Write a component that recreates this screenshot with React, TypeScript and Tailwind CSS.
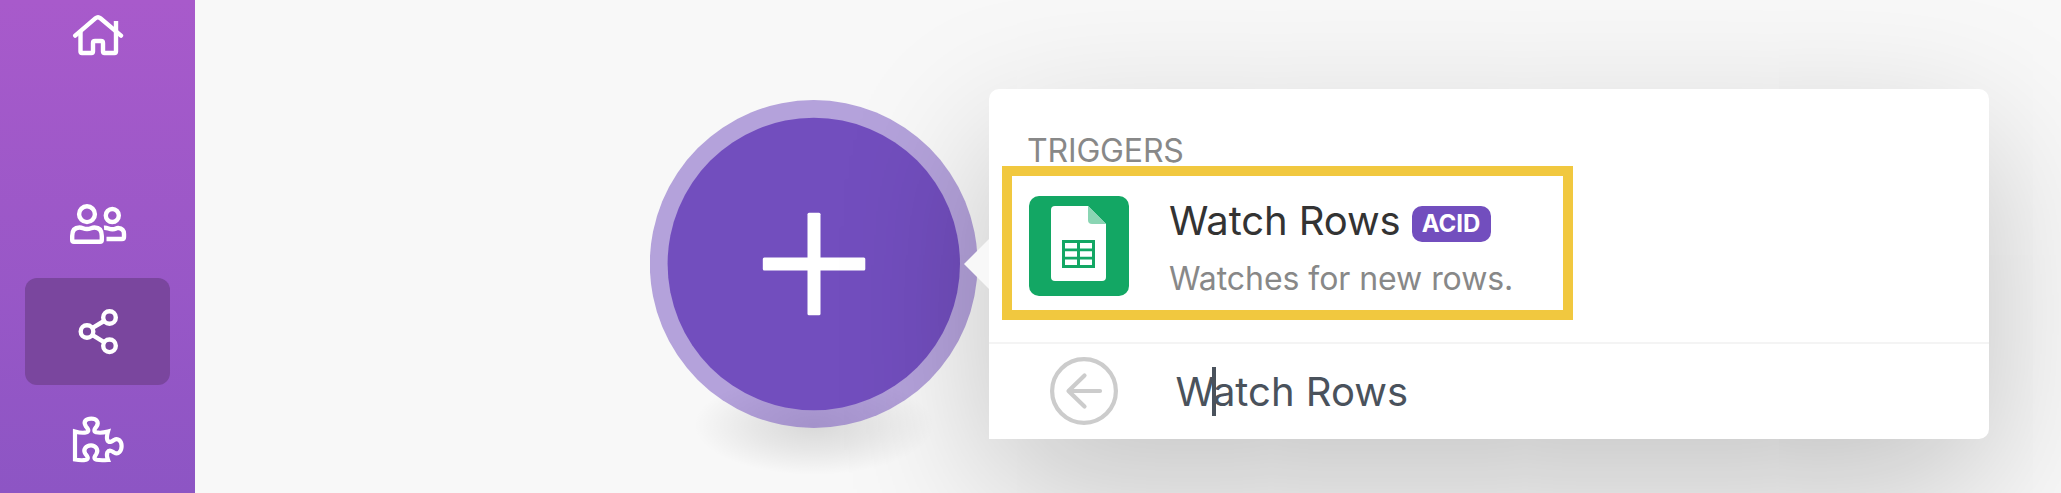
import React from "react";

const stroke = {
  fill: "none",
  stroke: "currentColor",
  strokeLinecap: "round" as const,
  strokeLinejoin: "round" as const,
};

function HomeIcon() {
  return (
    <svg width="52" height="42" viewBox="72 14 52 42" {...stroke} strokeWidth="4.4">
      <path d="M75.200 35.600 L95.600 18.200 Q98 16.200 100.400 18.200 L121 35.600" />
      <path d="M80.500 32 V51.500 Q80.500 53 82 53 H91.500 Q93 53 93 51.500 V43 Q93 41 95 41 H101 Q103 41 103 43 V51.500 Q103 53 104.500 53 H114.500 Q116 53 116 51.500 V21" strokeLinecap="butt" />
    </svg>
  );
}

function TeamIcon() {
  return (
    <svg width="58" height="42" viewBox="69 203 58 42" {...stroke} strokeWidth="4.4">
      <circle cx="87" cy="214.2" r="7.9" />
      <circle cx="112.3" cy="215.5" r="6.500" />
      <path d="M72.200 240 V236 Q72.200 227.500 79.500 227.500 C83 227.500 83 229 87 229 C91 229 91 227.500 94.500 227.500 Q101.800 227.500 101.800 236 V240 Q101.800 241.800 100 241.800 H74 Q72.200 241.800 72.200 240 Z" />
      <path d="M104 227.800 C108 227.500 108.500 229.300 112.500 229.300 C116 229.300 116 227.900 118 227.900 Q124 228.500 124 234 V237 Q124 239 122 239 H106.500" strokeLinecap="butt" />
    </svg>
  );
}

function ShareIcon() {
  return (
    <svg width="42" height="48" viewBox="77 307.500 42 48" {...stroke} strokeWidth="4.400">
      <circle cx="87" cy="331" r="6.300" />
      <circle cx="109.500" cy="317" r="6.300" />
      <circle cx="109.500" cy="345.300" r="6.300" />
      <path d="M92.600 327.300 L104 320.500 M92.600 334.700 L104 341.700" />
    </svg>
  );
}

function PuzzleIcon() {
  return (
    <svg width="54" height="48" viewBox="72 415 54 48" {...stroke} strokeWidth="4.200" strokeLinejoin="miter">
      <path d="M75 431.500 C79 432.600 84 433 86.500 432.300 C90 431 87.500 428.500 86 426.500 C82.500 421 86.500 418.600 91.300 418.600 C96.500 418.600 99.500 422 96.500 426.500 C95 428.500 92.800 431 96.200 432.300 C99 433 104 432.600 108 431.500 C107 435 106.500 438 107.300 440 C109 443.500 112 441.500 114 440 C118 437.500 121.600 441 121.600 446 C121.600 451 118.500 455.200 114 452.500 C112 451 109 449.300 107.300 452.500 C106.500 455 107 457.500 108 460 C104 460.300 100 460.500 96.700 459.800 C92.800 458.500 94.800 456 96.300 454 C99 449.500 95.500 445.300 91 445.300 C86 445.300 82.500 449.500 85.500 454 C87 456 89.500 458.500 86 459.800 C83 460.500 79 460.300 75 459.500 Z" />
    </svg>
  );
}

function SheetsIcon() {
  return (
    <svg width="100" height="100" viewBox="0 0 100 100" className="shrink-0">
      <rect width="100" height="100" rx="10" fill="#13a764" />
      <path d="M26 10 H59 L77 28 V81 Q77 85 73 85 H26 Q22 85 22 81 V14 Q22 10 26 10 Z" fill="#fff" />
      <path d="M59 10 L77 28 H63 Q59 28 59 24 Z" fill="#8ad5b3" />
      <path d="M33 44 H66 V72 H33 Z" fill="#13a764" />
      <path d="M36 47 H48 V52.500 H36 Z M51 47 H63 V52.500 H51 Z M36 55.200 H48 V60.700 H36 Z M51 55.200 H63 V60.700 H51 Z M36 63.500 H48 V69 H36 Z M51 63.500 H63 V69 H51 Z" fill="#fff" />
    </svg>
  );
}

function BackIcon() {
  return (
    <svg width="68" height="68" viewBox="0 0 68 68" {...stroke} strokeWidth="4.200" className="mb-[2px] text-[#cccccc]">
      <circle cx="34" cy="34" r="31.900" />
      <path d="M34.500 18.500 L18.500 34 L34.500 49.500 M19 34 H50" />
    </svg>
  );
}

function Sidebar() {
  return (
    <nav className="flex h-full w-[195px] shrink-0 flex-col items-center bg-linear-to-b from-[#a85acb] to-[#8d55c4] text-white">
      <div className="mt-[14px] h-[42px] pl-[1px]"><HomeIcon /></div>
      <div className="mt-[147px] h-[42px] pl-[1px]"><TeamIcon /></div>
      <div className="mt-[33px] flex h-[107px] w-[145px] items-center justify-center rounded-xl bg-[#7a469e]">
        <ShareIcon />
      </div>
      <div className="mt-[30px] h-[48px] pl-[3px]"><PuzzleIcon /></div>
    </nav>
  );
}

function AddModule() {
  return (
    <div className="relative mt-[99.5px] ml-[455px] h-[328px] w-[328px] shrink-0">
      <div className="absolute top-[275px] left-[44px] h-[100px] w-[240px] bg-[radial-gradient(closest-side,rgba(0,0,0,0.13),rgba(0,0,0,0.07)_50%,rgba(0,0,0,0))]" />
      <svg className="relative" width="328" height="328" viewBox="0 0 328 328">
        <circle cx="163.700" cy="164" r="163.900" fill="#704bbd" fillOpacity="0.5" />
        <circle cx="163.800" cy="164" r="146.200" fill="#724ebe" />
        <rect x="112.800" y="157.500" width="102.500" height="13" rx="1.500" fill="#fff" />
        <rect x="157.500" y="112.700" width="13" height="102.500" rx="1.500" fill="#fff" />
      </svg>
    </div>
  );
}

function TriggerPanel() {
  return (
    <section className="relative mt-[89px] ml-[11px] flex h-[350px] w-[1000px] shrink-0 flex-col rounded-[10px] rounded-bl-none bg-white shadow-[0_50px_150px_rgba(0,0,0,0.22)]">
      <svg className="absolute top-[150px] -left-[25px]" width="25" height="50" viewBox="0 0 25 50">
        <path d="M25 0 L0 25 L25 50 Z" fill="#f8f8f8" />
      </svg>
      <div className="h-[253px] pt-[42px]">
        <h2 className="pl-[38px] text-[32px] leading-[39px] tracking-[-0.15px] text-[#888888]">TRIGGERS</h2>
        <div className="-mt-[4px] ml-[13px] flex h-[154px] w-[571px] border-[10px] border-[#f1c83f] pt-[20px] pl-[17px]">
          <SheetsIcon />
          <div className="ml-[40px] whitespace-nowrap">
            <div className="flex h-[48px] items-start">
              <span className="mt-[1px] text-[40px] leading-[48px] tracking-[-0.1px] text-[#333333]">Watch Rows</span>
              <span className="mt-[10px] ml-[11px] flex h-[36px] w-[79px] items-center justify-center rounded-[10px] bg-[#724ebe] text-2xl font-bold text-white">ACID</span>
            </div>
            <p className="mt-[15px] text-[32px] leading-[40px] tracking-[-0.06px] text-[#888888]">Watches for new rows.</p>
          </div>
        </div>
      </div>
      <div className="flex flex-1 items-center border-t-2 border-[#f4f4f4] pl-[61px]">
        <BackIcon />
        <div className="relative ml-[57.5px] text-[40px] leading-[48px] text-[#4a525c]">
          Watch Rows
          <span className="absolute -top-px left-[36px] h-[49px] w-[4px] bg-[#4a525c]" />
        </div>
      </div>
    </section>
  );
}

export default function App() {
  return (
    <div className="flex h-[493px] w-[2061px] overflow-hidden bg-[#f8f8f8] font-[Inter,sans-serif]">
      <Sidebar />
      <main className="flex min-w-0 flex-1 items-start overflow-hidden">
        <AddModule />
        <TriggerPanel />
      </main>
    </div>
  );
}
